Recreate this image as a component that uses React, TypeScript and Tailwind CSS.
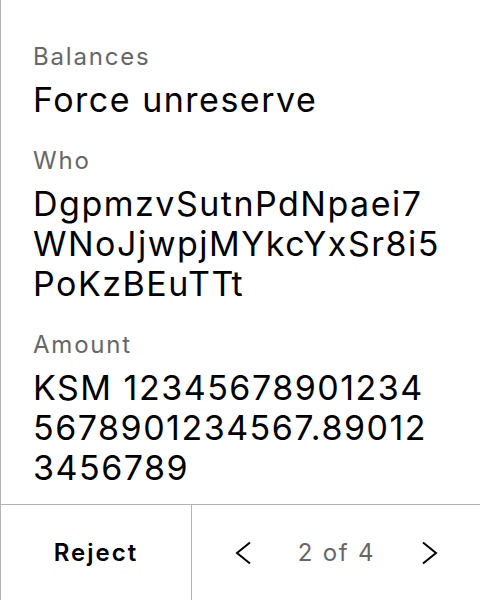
import React from 'react';

const fields = [
  { label: 'Balances', value: 'Force unreserve' },
  { label: 'Who', value: 'DgpmzvSutnPdNpaei7WNoJjwpjMYkcYxSr8i5PoKzBEuTTt' },
  { label: 'Amount', value: 'KSM 123456789012345678901234567.890123456789' },
];

export default function App() {
  return (
    <div className="w-[480px] h-[600px] bg-white border-l border-[#b3b3b3] flex flex-col font-['Inter',sans-serif]">
      <div className="flex-1 pl-[32px] pr-[40px] pt-[41px] flex flex-col gap-[25px]">
        {fields.map((f) => (
          <div key={f.label} className="flex flex-col gap-[7px]">
            <div className="text-[24px] leading-[32px] tracking-[1.8px] text-[#666666]">{f.label}</div>
            <div className="text-[34px] leading-[40px] tracking-[1.5px] text-black break-all">{f.value}</div>
          </div>
        ))}
      </div>
      <div className="h-[96px] border-t border-[#b3b3b3] flex">
        <button className="w-[191px] border-r border-[#b3b3b3] flex items-center justify-center text-[24px] tracking-[2px] font-semibold text-black">
          Reject
        </button>
        <div className="flex-1 flex items-center justify-between pl-[43px] pr-[42px]">
          <svg width="16" height="24" viewBox="0 0 16 24" fill="none" stroke="black" strokeWidth="2">
            <path d="M15 1.5 L2 12 L15 22.5" />
          </svg>
          <span className="text-[24px] tracking-[1.8px] text-[#666666]">2 of 4</span>
          <svg width="16" height="24" viewBox="0 0 16 24" fill="none" stroke="black" strokeWidth="2">
            <path d="M1 1.5 L14 12 L1 22.5" />
          </svg>
        </div>
      </div>
    </div>
  );
}
